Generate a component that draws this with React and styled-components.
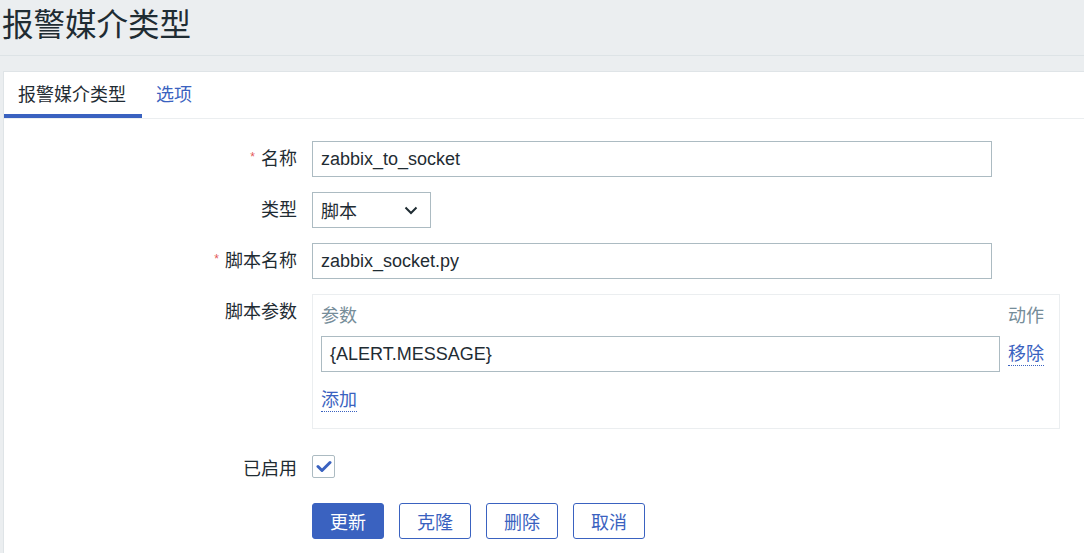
import React from "react";
import styled, { createGlobalStyle } from "styled-components";

const Global = createGlobalStyle`
  html, body { margin: 0; padding: 0; background: #ebeef0; }
  body {
    font-family: "Liberation Sans", Arial, "Noto Sans CJK SC", sans-serif;
    color: #1f2c33;
    font-size: 18px;
  }
  * { box-sizing: border-box; }
`;

const BLUE = "#3a62c0";

const Header = styled.header`
  height: 56px;
  border-bottom: 1px solid #dde3e6;
  padding-left: 2px;
  display: flex;
  align-items: center;
`;

const Title = styled.h1`
  margin: 0 0 4px 0;
  font-size: 31.5px;
  font-weight: normal;
  line-height: 1;
  color: #1f2c33;
`;

const Panel = styled.main`
  margin: 15px 0 0 3px;
  background: #ffffff;
  border-left: 1px solid #dfe4e7;
  border-top: 1px solid #dfe4e7;
  min-height: 500px;
`;

const Tabs = styled.nav`
  display: flex;
  height: 47px;
  border-bottom: 1px solid #ebeef0;
`;

const Tab = styled.div`
  padding: 0 16px 0 14px;
  display: flex;
  align-items: center;
  font-size: 18px;
  color: ${(p) => (p.$active ? "#1f2c33" : BLUE)};
  border-bottom: 4px solid ${(p) => (p.$active ? BLUE : "transparent")};
`;

const Form = styled.div`
  display: grid;
  grid-template-columns: 293px 1fr;
  column-gap: 15px;
  row-gap: 15px;
  padding-top: 22px;
`;

const Label = styled.div`
  display: flex;
  justify-content: flex-end;
  align-items: flex-start;
  height: ${(p) => 36 + (p.$top || 0)}px;
  line-height: 36px;
  font-size: 18px;
  white-space: nowrap;
  padding-top: ${(p) => p.$top || 0}px;
`;

const Star = styled.span`
  color: #e45959;
  font-size: 12px;
  line-height: 1;
  margin-right: 6px;
  position: relative;
  top: 10px;
`;

const Field = styled.div`
  display: flex;
  align-items: flex-start;
  min-height: 36px;
`;

const TextInput = styled.div`
  width: ${(p) => p.$w || "680px"};
  height: 36px;
  border: 1px solid #acbbc2;
  padding: 0 8px;
  display: flex;
  align-items: center;
  font-size: 18px;
  color: #1f2c33;
  background: #fff;
`;

const Select = styled.div`
  width: 119px;
  height: 36px;
  border: 1px solid #acbbc2;
  padding: 0 12px 0 8px;
  display: flex;
  align-items: center;
  justify-content: space-between;
  font-size: 18px;
`;

const ParamBox = styled.div`
  width: 748px;
  height: 135px;
  border: 1px solid #ebeef0;
  padding: 8px 15px 0 8px;
  display: grid;
  grid-template-columns: 1fr auto;
  grid-template-rows: 26px 36px 42px;
  column-gap: 8px;
  row-gap: 7px;
  align-items: center;
`;

const ColHead = styled.div`
  color: #768d99;
  font-size: 18px;
  line-height: 26px;
`;

const LinkText = styled.span`
  color: ${BLUE};
  font-size: 18px;
  border-bottom: 1px dotted ${BLUE};
  line-height: 22px;
  justify-self: start;
`;

const Check = styled.div`
  width: 23px;
  height: 23px;
  border: 1px solid #acbbc2;
  border-radius: 2px;
  display: flex;
  align-items: center;
  justify-content: center;
  margin-top: ${(p) => p.$top || 0}px;
`;

const Buttons = styled.div`
  display: flex;
  gap: 15px;
  grid-column: 2;
  padding-top: 1px;
`;

const Button = styled.button`
  width: 72px;
  height: 36px;
  border-radius: 3px;
  font-family: inherit;
  font-size: 18px;
  border: 1px solid ${BLUE};
  background: ${(p) => (p.$primary ? BLUE : "#fff")};
  color: ${(p) => (p.$primary ? "#fff" : BLUE)};
  padding: 0;
  cursor: pointer;
`;

const Chevron = () => (
  <svg width="14" height="9" viewBox="0 0 14 9">
    <path d="M1.5 1.5 L7 7 L12.5 1.5" fill="none" stroke="#1f2c33" strokeWidth="2" />
  </svg>
);

const Tick = () => (
  <svg width="16" height="13" viewBox="0 0 16 13">
    <path d="M2 6.5 L6 10.5 L14 2.5" fill="none" stroke={BLUE} strokeWidth="3" strokeLinecap="round" strokeLinejoin="round" />
  </svg>
);

export default function App() {
  return (
    <>
      <Global />
      <Header>
        <Title>报警媒介类型</Title>
      </Header>
      <Panel>
        <Tabs>
          <Tab $active>报警媒介类型</Tab>
          <Tab>选项</Tab>
        </Tabs>
        <Form>
          <Label><Star>*</Star>名称</Label>
          <Field><TextInput>zabbix_to_socket</TextInput></Field>

          <Label>类型</Label>
          <Field>
            <Select>
              <span>脚本</span>
              <Chevron />
            </Select>
          </Field>

          <Label><Star>*</Star>脚本名称</Label>
          <Field><TextInput>zabbix_socket.py</TextInput></Field>

          <Label>脚本参数</Label>
          <Field>
            <ParamBox>
              <ColHead>参数</ColHead>
              <ColHead>动作</ColHead>
              <TextInput $w="100%">{"{ALERT.MESSAGE}"}</TextInput>
              <LinkText>移除</LinkText>
              <LinkText>添加</LinkText>
              <span />
            </ParamBox>
          </Field>

          <Label $top={7}>已启用</Label>
          <Field>
            <Check $top={11}><Tick /></Check>
          </Field>

          <Buttons>
            <Button $primary>更新</Button>
            <Button>克隆</Button>
            <Button>删除</Button>
            <Button>取消</Button>
          </Buttons>
        </Form>
      </Panel>
    </>
  );
}
